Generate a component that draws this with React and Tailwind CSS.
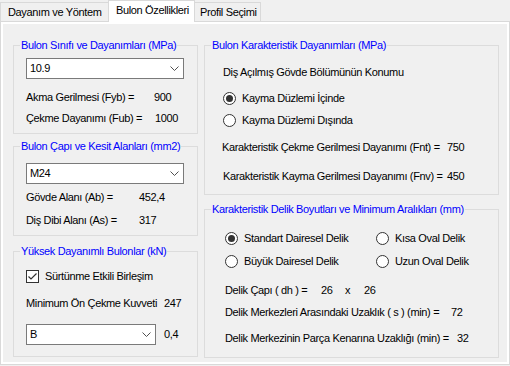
// WinForms-style "Bulon Özellikleri" tab page
function Combo({ value, width }) {
  return (
    <div
      className="flex h-[21px] items-center justify-between border border-[#7a7a7a] bg-white pl-[3px] pr-[4px]"
      style={{ width }}
    >
      <span>{value}</span>
      <svg width="9" height="5" viewBox="0 0 9 5" className="shrink-0">
        <path d="M0.5 0.5 L4.5 4.5 L8.5 0.5" fill="none" stroke="#505050" strokeWidth="1" />
      </svg>
    </div>
  );
}

function Radio({ checked, label }) {
  return (
    <div className="flex h-[14px] items-center">
      <span className="flex h-[13px] w-[13px] shrink-0 items-center justify-center rounded-full border border-[#333333] bg-white">
        {checked && <span className="h-[7px] w-[7px] rounded-full bg-[#333333]" />}
      </span>
      <span className="ml-[6px] whitespace-nowrap">{label}</span>
    </div>
  );
}

function Group({ title, height, className = '', children }) {
  return (
    <fieldset className={`border border-[#dcdcdc] ${className}`} style={{ height }}>
      <legend className="ml-[6px] px-[1px] leading-[13px] text-[#0000ff] whitespace-nowrap">{title}</legend>
      {children}
    </fieldset>
  );
}

export default function App() {
  return (
    <div className="h-[366px] w-[510px] overflow-hidden bg-[#f0f0f0] font-['Liberation_Sans',Arial,sans-serif] text-[11px] leading-[13px] tracking-[-0.35px] text-black">
      {/* Tab strip */}
      <div className="flex h-[21px] items-end">
        <div className="flex h-[19px] w-[108px] items-center border-l border-t border-[#d9d9d9] bg-[#f0f0f0] pl-[7px]">
          Dayanım ve Yöntem
        </div>
        <div className="relative z-10 -mb-px flex h-[22px] w-[87px] items-start border-l border-r border-t border-[#d9d9d9] bg-white pl-[7px] pt-[3px]">
          Bulon Özellikleri
        </div>
        <div className="flex h-[19px] w-[66px] items-center border-r border-t border-[#d9d9d9] bg-[#f0f0f0] pl-[5px]">
          Profil Seçimi
        </div>
      </div>

      {/* Tab page */}
      <div className="h-[344px] border border-[#d9d9d9] bg-white p-[2px]">
        <div className="flex h-full bg-[#f0f0f0] pl-[10px] pt-[15px]">
          {/* Left column */}
          <div className="flex w-[185px] flex-col">
            <Group title="Bulon Sınıfı ve Dayanımları (MPa)" height={95}>
              <div className="pl-[12px]">
                <div className="mt-[6px]">
                  <Combo value="10.9" width={158} />
                </div>
                <div className="mt-[8px] flex h-[21px] items-center">
                  <span className="w-[128px] whitespace-nowrap">Akma Gerilmesi (Fyb) =</span>
                  <span>900</span>
                </div>
                <div className="flex h-[21px] items-center">
                  <span className="w-[129px] whitespace-nowrap">Çekme Dayanımı (Fub) =</span>
                  <span>1000</span>
                </div>
              </div>
            </Group>

            <Group title="Bulon Çapı ve Kesit Alanları (mm2)" height={96} className="mt-[6px]">
              <div className="pl-[12px]">
                <div className="mt-[10px]">
                  <Combo value="M24" width={158} />
                </div>
                <div className="mt-[2px] flex h-[23px] items-center">
                  <span className="w-[113px] whitespace-nowrap">Gövde Alanı (Ab) =</span>
                  <span>452,4</span>
                </div>
                <div className="flex h-[23px] items-center">
                  <span className="w-[113px] whitespace-nowrap">Diş Dibi Alanı (As) =</span>
                  <span>317</span>
                </div>
              </div>
            </Group>

            <Group title="Yüksek Dayanımlı Bulonlar (kN)" height={112} className="mt-[9px]">
              <div className="pl-[12px]">
                <div className="mt-[12px] flex h-[13px] items-center">
                  <span className="flex h-[13px] w-[13px] shrink-0 items-center justify-center border border-[#333333] bg-white">
                    <svg width="11" height="11" viewBox="0 0 11 11">
                      <path d="M1.5 5.5 L4 8 L9.5 2.5" fill="none" stroke="#333333" strokeWidth="1.2" />
                    </svg>
                  </span>
                  <span className="ml-[6px] whitespace-nowrap">Sürtünme Etkili Birleşim</span>
                </div>
                <div className="mt-[14px] flex h-[13px] items-center">
                  <span className="w-[138px] whitespace-nowrap">Minimum Ön Çekme Kuvveti</span>
                  <span>247</span>
                </div>
                <div className="mt-[14px] flex items-center">
                  <Combo value="B" width={130} />
                  <span className="ml-[8px]">0,4</span>
                </div>
              </div>
            </Group>
          </div>

          {/* Right column */}
          <div className="ml-[6px] flex w-[295px] flex-col">
            <Group title="Bulon Karakteristik Dayanımları (MPa)" height={156}>
              <div className="pl-[18px]">
                <div className="mt-[14px] flex h-[13px] items-center whitespace-nowrap">
                  Diş Açılmış Gövde Bölümünün Konumu
                </div>
                <div className="mt-[12px]">
                  <Radio checked label="Kayma Düzlemi İçinde" />
                </div>
                <div className="mt-[8px]">
                  <Radio label="Kayma Düzlemi Dışında" />
                </div>
                <div className="-ml-px mt-[13px] flex h-[14px] items-center whitespace-nowrap">
                  <span className="w-[225px]">Karakteristik Çekme Gerilmesi Dayanımı (Fnt) =</span>
                  <span>750</span>
                </div>
                <div className="mt-[15px] flex h-[14px] items-center whitespace-nowrap">
                  <span className="w-[224px]">Karakteristik Kayma Gerilmesi Dayanımı (Fnv) =</span>
                  <span>450</span>
                </div>
              </div>
            </Group>

            <Group title="Karakteristik Delik Boyutları ve Minimum Aralıkları (mm)" height={155} className="mt-[8px]">
              <div className="pl-[20px]">
                <div className="mt-[15px] flex">
                  <div className="w-[151px]">
                    <Radio checked label="Standart Dairesel Delik" />
                  </div>
                  <Radio label="Kısa Oval Delik" />
                </div>
                <div className="mt-[9px] flex">
                  <div className="w-[151px]">
                    <Radio label="Büyük Dairesel Delik" />
                  </div>
                  <Radio label="Uzun Oval Delik" />
                </div>
                <div className="mt-[15px] flex h-[14px] items-center whitespace-nowrap">
                  <span className="w-[96px]">Delik Çapı ( dh ) =</span>
                  <span className="w-[24px]">26</span>
                  <span className="w-[19px]">x</span>
                  <span>26</span>
                </div>
                <div className="mt-[8px] flex h-[14px] items-center whitespace-nowrap">
                  <span className="w-[226px]">Delik Merkezleri Arasındaki Uzaklık ( s ) (min) =</span>
                  <span>72</span>
                </div>
                <div className="mt-[12px] flex h-[14px] items-center whitespace-nowrap">
                  <span className="w-[232px]">Delik Merkezinin Parça Kenarına Uzaklığı (min) =</span>
                  <span>32</span>
                </div>
              </div>
            </Group>
          </div>
        </div>
      </div>
    </div>
  );
}
